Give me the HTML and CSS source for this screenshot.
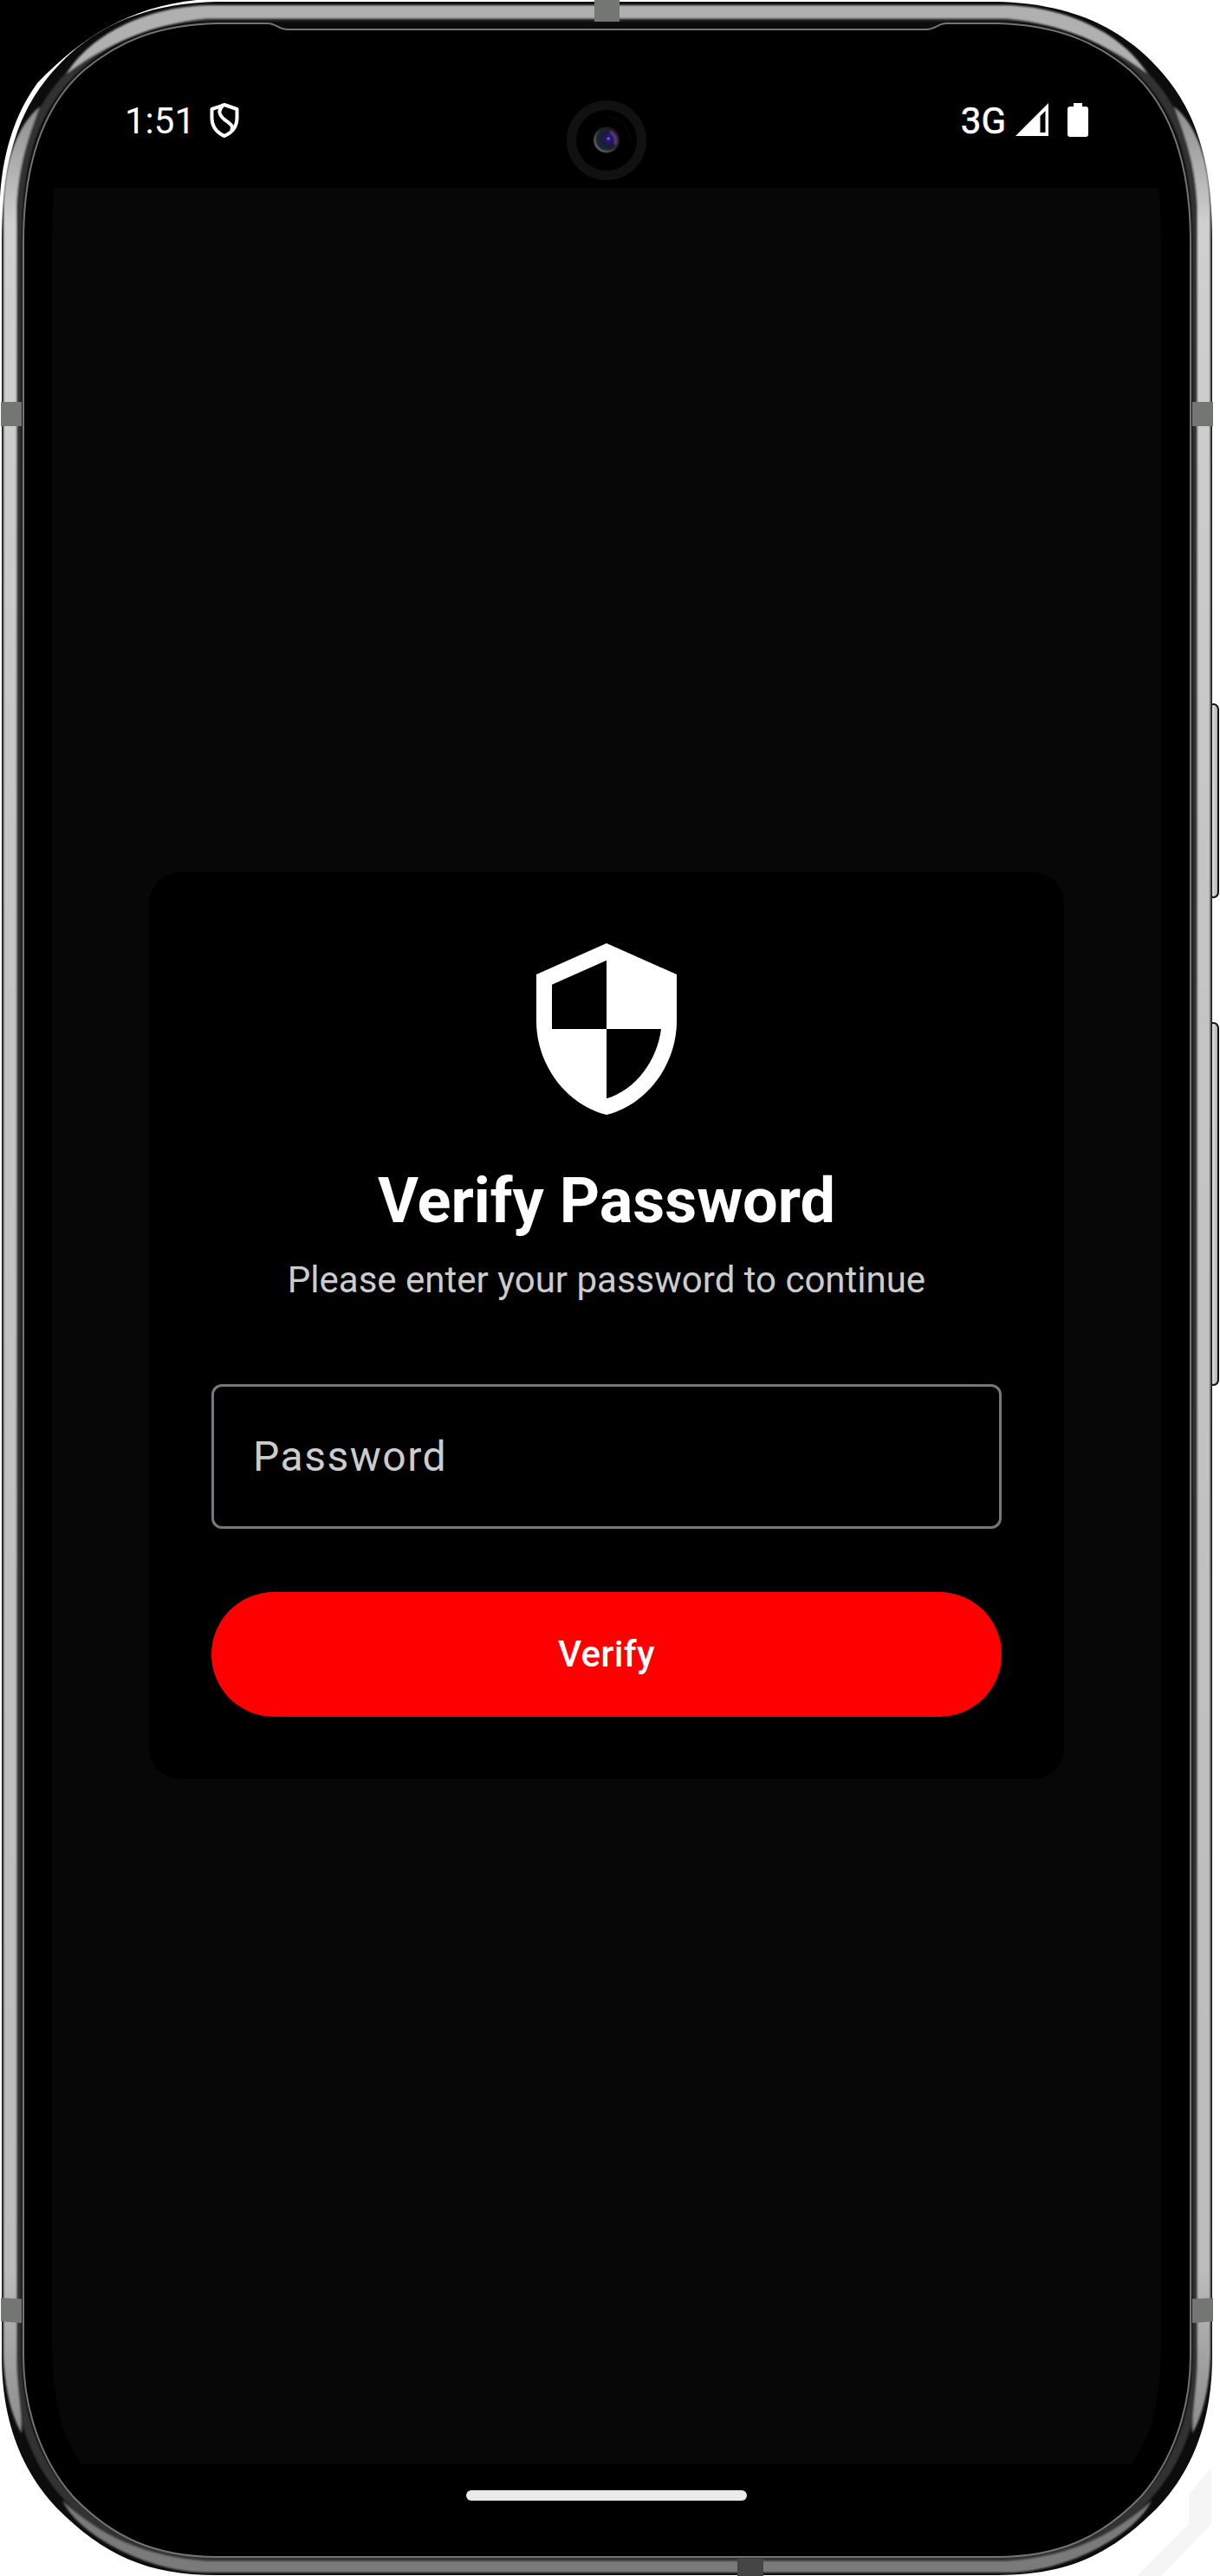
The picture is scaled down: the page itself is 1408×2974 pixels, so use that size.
FILE: index.html
```html
<!DOCTYPE html>
<html lang="en">
<head>
<meta charset="utf-8">
<title>Verify Password</title>
<link rel="stylesheet" href="styles.css">
</head>
<body>
<div class="device">
  <svg class="frame" viewBox="0 0 1408 2974" aria-hidden="true">
    <defs>
      <linearGradient id="side" gradientUnits="userSpaceOnUse" x1="0" y1="123" x2="0" y2="2810">
        <stop offset="0" stop-color="#8c8c8c"/><stop offset=".05" stop-color="#d0d0d0"/>
        <stop offset=".3" stop-color="#c6c6c6"/><stop offset=".93" stop-color="#bcbcbc"/><stop offset="1" stop-color="#8c8c8c"/>
      </linearGradient>
      <linearGradient id="key"><stop offset="0" stop-color="#777"/><stop offset=".4" stop-color="#ddd"/><stop offset="1" stop-color="#aaa"/></linearGradient>
      <radialGradient id="lens" cx=".6" cy=".45"><stop offset="0" stop-color="#5928d8"/><stop offset=".2" stop-color="#2b1570"/><stop offset=".6" stop-color="#171b38"/><stop offset="1" stop-color="#182a36"/></radialGradient>
      <linearGradient id="rim" x1="0" y1="1" x2="1" y2="0"><stop offset="0" stop-color="#6b6565"/><stop offset=".6" stop-color="#242024"/><stop offset="1" stop-color="#17131a"/></linearGradient>
      <filter id="soft" filterUnits="userSpaceOnUse" x="-10" y="-10" width="1430" height="2994"><feGaussianBlur stdDeviation="1"/></filter>
      <clipPath id="left-half"><rect width="701" height="2974"/></clipPath>
      <g id="half" clip-path="url(#left-half)">
        <path fill="#0c0c0c" d="M712 2H250C180 4 125 22 80 63C30 110 2 165 2 280V2720C2 2790 22 2850 66 2896C120 2950 170 2973 250 2973H712Z"/>
        <g filter="url(#soft)">
          <path fill="none" stroke="#303030" stroke-width="10" d="M712 19H250C180 20 134 38 92 75C43 120 20 175 20 280V2720C20 2785 40 2843 79 2884C126 2934 175 2956 250 2956H712"/>
          <path fill="#b0b0b0" d="M712 6H240C165 8 103 42 77 85C108 61 165 28 240 21H712Z"/>
          <path fill="url(#side)" d="M46 123C20 145 5 185 4 240V2720C5 2755 13 2790 25 2809C25 2780 19 2755 19 2720V240C21 190 34 155 46 123Z"/>
          <path fill="#7a7a7a" d="M72 2887C90 2926 170 2970 240 2970H712V2957H240C165 2952 115 2927 72 2887Z"/>
        </g>
        <path fill="#000" stroke="#747474" stroke-width="2" d="M712 34H332C322 34 318 27 309 27H250C180 29 137 48 97 81C50 122 27 190 27 280V2720C27 2780 47 2840 84 2882C130 2930 180 2952 250 2952H712"/>
      </g>
    </defs>
    <path fill="#000" d="M0 0H227C150 8 95 42 43 96C15 135 3 180 0 228Z"/>
    <path fill="#f5f5f5" d="M1397 2850L1372 2880V2914L1312 2974H1340L1398 2914V2850Z"/>
    <rect x="1395" y="813" width="11" height="223" rx="6" fill="url(#key)" stroke="#111" stroke-width="2"/>
    <rect x="1395" y="1181" width="11" height="418" rx="6" fill="url(#key)" stroke="#111" stroke-width="2"/>
    <use href="#half"/>
    <use href="#half" transform="translate(1401 0) scale(-1 1)"/>
    <path fill="#737673" d="M686 0H715V25H686ZM1 464H25V492H1ZM1376 464H1400V492H1376ZM1 2653L25 2654V2682L1 2680ZM1400 2653L1376 2654V2682L1400 2680Z"/>
    <path fill="#454545" d="M851 2954H881V2974H851Z"/>
    <path fill="#070707" d="M63 217H1337Q1340 245 1340 290V2700C1340 2765 1331 2810 1306 2845H94C69 2810 60 2765 60 2700V290Q60 245 63 217Z"/>
    <circle cx="700" cy="162" r="40.5" fill="none" stroke="#111" stroke-width="11"/>
    <path d="M702 134Q727 139 727 164" fill="none" stroke="#0c0c0c"/>
    <circle cx="700" cy="161.500" r="13.500" fill="url(#lens)" stroke="url(#rim)" stroke-width="3"/>
    <path d="M704 152Q713 157 710 167" fill="none" stroke="#66407c" stroke-width="3" filter="url(#soft)"/>
    <circle cx="702" cy="160" r="1.500" fill="#8358ff"/>
  </svg>

  <div class="screen">
    <header class="status">
      <div class="status-left">
        <span>1:51</span>
        <svg width="34" height="40" viewBox="0 0 34 40" fill="none" stroke="#fff" stroke-width="4" stroke-linejoin="round"><path d="M17 2L31.500 7V17C31.500 27 26 34 17 38C8 34 2.500 27 2.500 17V7Z"/><path d="M15 3C9 9 11 14 17 19C24 24 28 26 25 32"/></svg>
      </div>
      <div class="status-right">
        <span>3G</span>
        <svg width="38" height="38" viewBox="0 0 38 38"><path fill="#fff" fill-rule="evenodd" d="M0 38L38 0V38ZM28.500 15V34H34.500V9Z"/></svg>
        <svg class="battery" width="24" height="39" viewBox="0 0 24 39"><path fill="#fff" d="M7 0H17V4H21Q24 4 24 7V36Q24 39 21 39H3Q0 39 0 36V7Q0 4 3 4H7Z"/></svg>
      </div>
    </header>

    <main class="content">
      <section class="card">
        <svg class="shield" viewBox="3 1 18 22"><path fill="#fff" d="M12 1L3 5v6c0 5.550 3.840 10.740 9 12 5.160-1.260 9-6.450 9-12V5l-9-4zm0 10.990h7c-.53 4.120-3.280 7.790-7 8.940V12H5V6.300l7-3.110v8.800z"/></svg>
        <h1>Verify Password</h1>
        <p>Please enter your password to continue</p>
        <div class="field">Password</div>
        <button class="verify">Verify</button>
      </section>
    </main>
    <footer class="nav"><div class="handle"></div></footer>
  </div>
</div>
</body>
</html>
```

FILE: styles.css
```css
* { box-sizing: border-box; }
body { margin: 0; background: #fff; font-family: Roboto, "Liberation Sans", sans-serif; }
.device { position: relative; width: 1408px; height: 2974px; overflow: hidden; }
.frame { position: absolute; inset: 0; width: 100%; height: 100%; }
.screen { position: relative; width: 1280px; height: 2974px; margin-left: 60px; display: flex; flex-direction: column; color: #fff; }
.status { height: 217px; padding: 119px 84px 0 84px; display: flex; justify-content: space-between; align-items: flex-start; font-size: 42px; line-height: 40px; }
.status-left, .status-right { display: flex; align-items: flex-start; }
.status-left { gap: 17px; }
.status-left span { padding-top: 1px; }
.status-right { gap: 11px; }
.status-right span { padding-top: 1px; -webkit-text-stroke: .6px #fff; }
.battery { margin-left: 11px; }
.content { height: 2628px; display: flex; flex-direction: column; align-items: center; padding-top: 790px; }
.card { width: 1056px; height: 1047px; padding: 82px 72px 72px; background: #000; border-radius: 36px; display: flex; flex-direction: column; align-items: center; }
.shield { width: 162px; height: 198px; flex: none; }
h1 { margin: 52px 0 0; font-size: 72px; line-height: 96px; font-weight: 700; }
p { margin: 13px 0 0; font-size: 42px; line-height: 60px; color: #ccc; }
.field { width: 912px; height: 168px; margin-top: 90px; padding-left: 45px; padding-bottom: 1px; border: 3px solid #79747e; border-radius: 12px; display: flex; align-items: center; font-size: 48px; letter-spacing: 1.5px; color: #ccc; }
.verify { width: 912px; height: 144px; margin-top: 73px; padding: 0 0 2px; border: 0; border-radius: 72px; background: #f00; color: #fff; font: 500 42px Roboto, sans-serif; letter-spacing: .4px; }
.nav { flex: 1; display: flex; justify-content: center; padding-top: 30px; }
.handle { width: 324px; height: 12px; border-radius: 6px; background: #ebebeb; }
```
